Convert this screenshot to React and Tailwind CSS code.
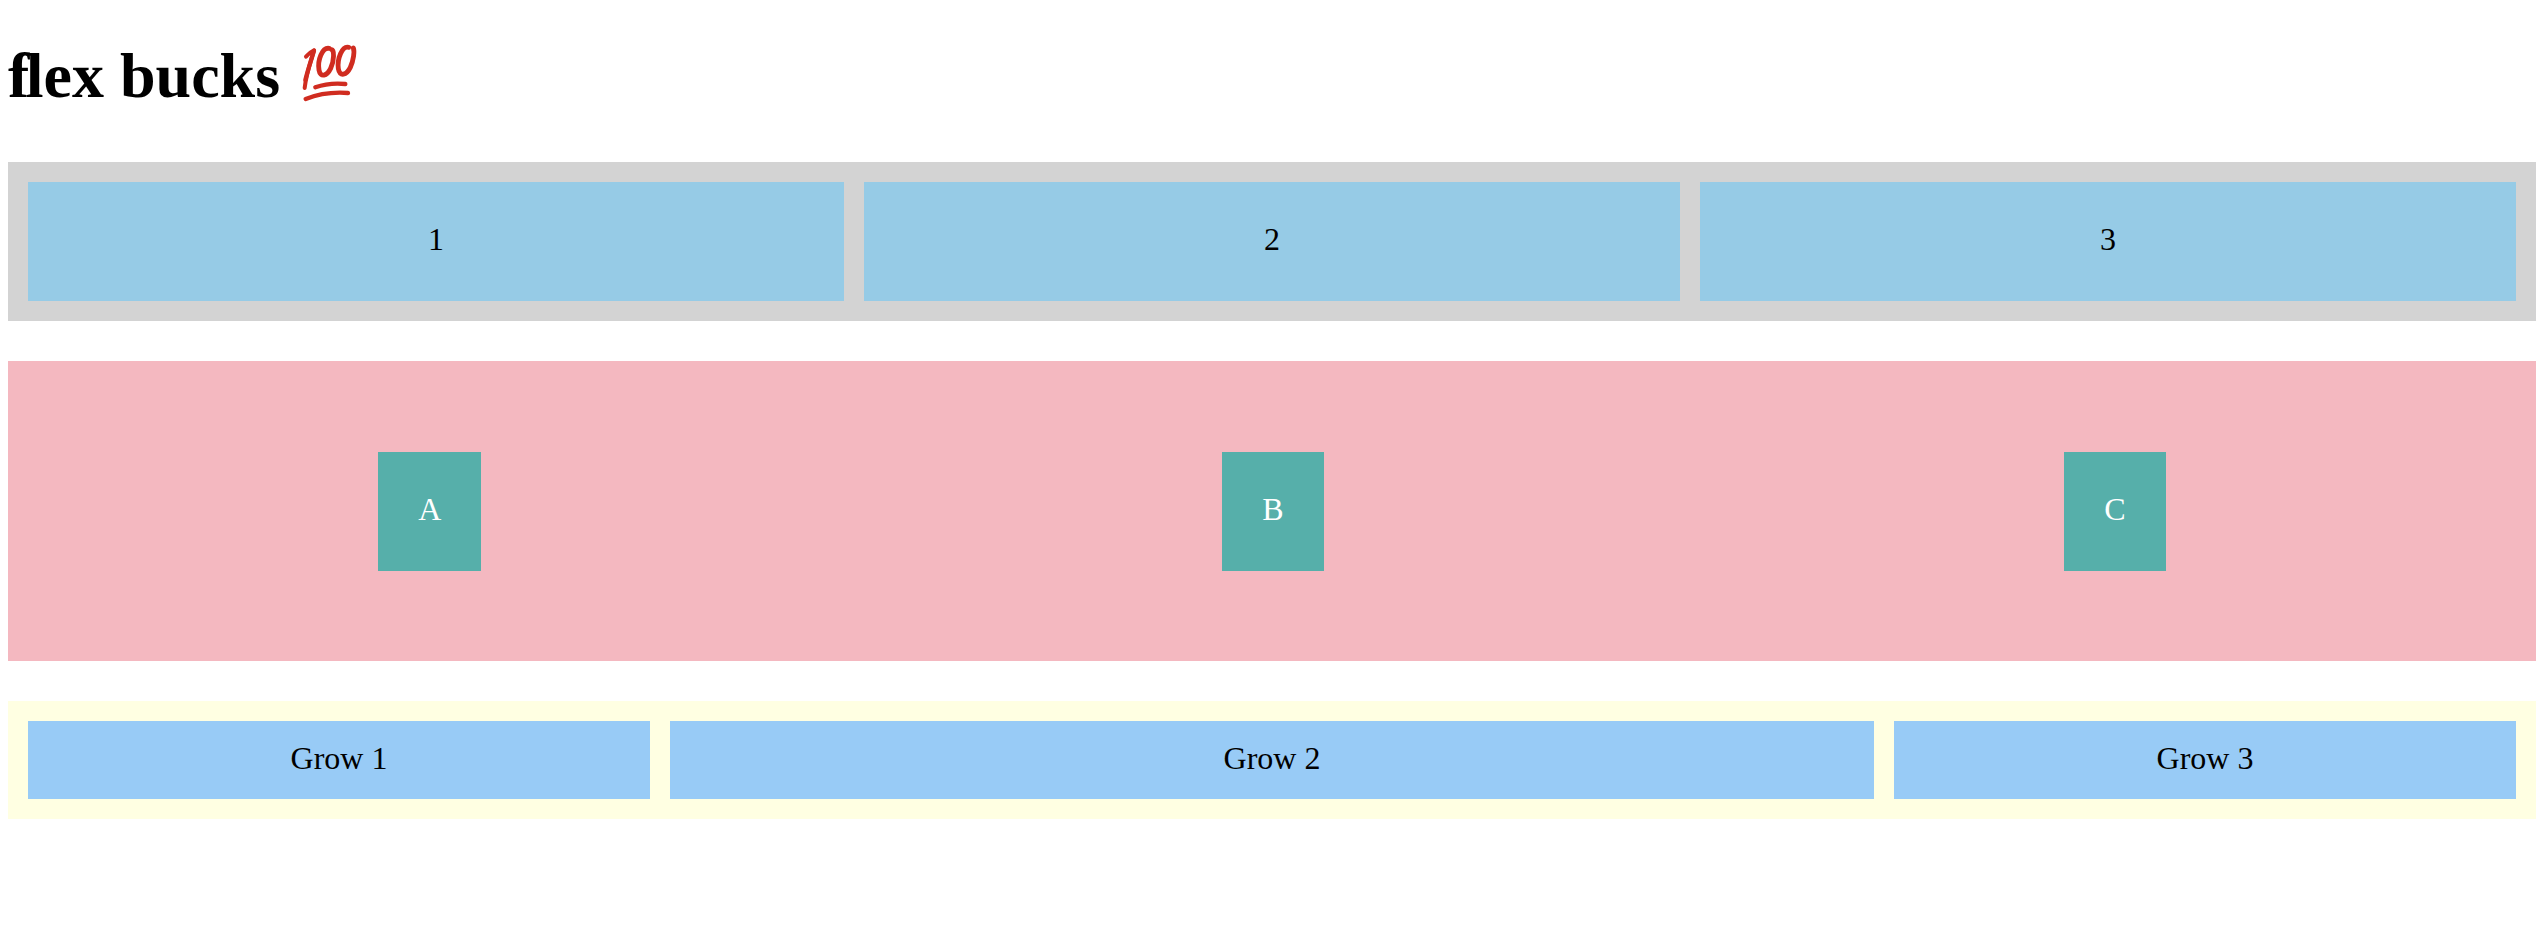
const Hundred = () => (
  <svg className="h-[66px] w-[68px]" viewBox="0 0 204 198" fill="none" stroke="#d02c20" strokeWidth="14.5" strokeLinecap="round" strokeLinejoin="round">
    <path d="M30 50C37 42 45 35 54 31C45 63 31 100 26 144" strokeWidth="12" />
    <path d="M54 32C46 60 37 84 28 120" strokeWidth="13" />
    <path d="M99 25C79 22 64 60 69 90C73 114 93 108 104 85C115 61 115 30 107 29" />
    <path d="M158 22C138 17 123 57 127 86C131 112 152 105 163 82C173 60 176 34 172 24" />
    <path d="M58 142C83 133 116 129 148 132" strokeWidth="13" />
    <path d="M29 177C67 162 115 156 156 159" strokeWidth="13" />
  </svg>
);

export default function App() {
  return (
    <main className="ml-2 mr-0.5 font-['Liberation_Serif',serif] text-[32px] leading-[34px] text-black">
      <h1 className="flex h-[162px] items-start pt-[39px] text-[64px] font-bold leading-[74px]">
        <span><span className="tracking-[-3.5px]">f</span>lex bucks</span>
        <span role="img" aria-label="100" className="ml-4 mt-px"><Hundred /></span>
      </h1>
      <section className="flex h-[159px] gap-5 bg-[#d3d3d3] p-5 text-center">
        {[1, 2, 3].map((n) => (
          <div key={n} className="flex-1 bg-[#96cbe6] py-10">{n}</div>
        ))}
      </section>
      <section className="mt-10 flex h-[300px] items-center justify-around bg-[#f4b8c0] text-white">
        {["A", "B", "C"].map((letter) => (
          <div key={letter} className="h-[119px] bg-[#56afaa] p-10">{letter}</div>
        ))}
      </section>
      <section className="mt-10 flex h-[118px] gap-5 bg-[#ffffe2] p-5 text-center">
        <div className="w-[622px] bg-[#98cbf6] py-5">Grow 1</div>
        <div className="flex-1 bg-[#98cbf6] py-5">Grow 2</div>
        <div className="w-[622px] bg-[#98cbf6] py-5">Grow 3</div>
      </section>
    </main>
  );
}
